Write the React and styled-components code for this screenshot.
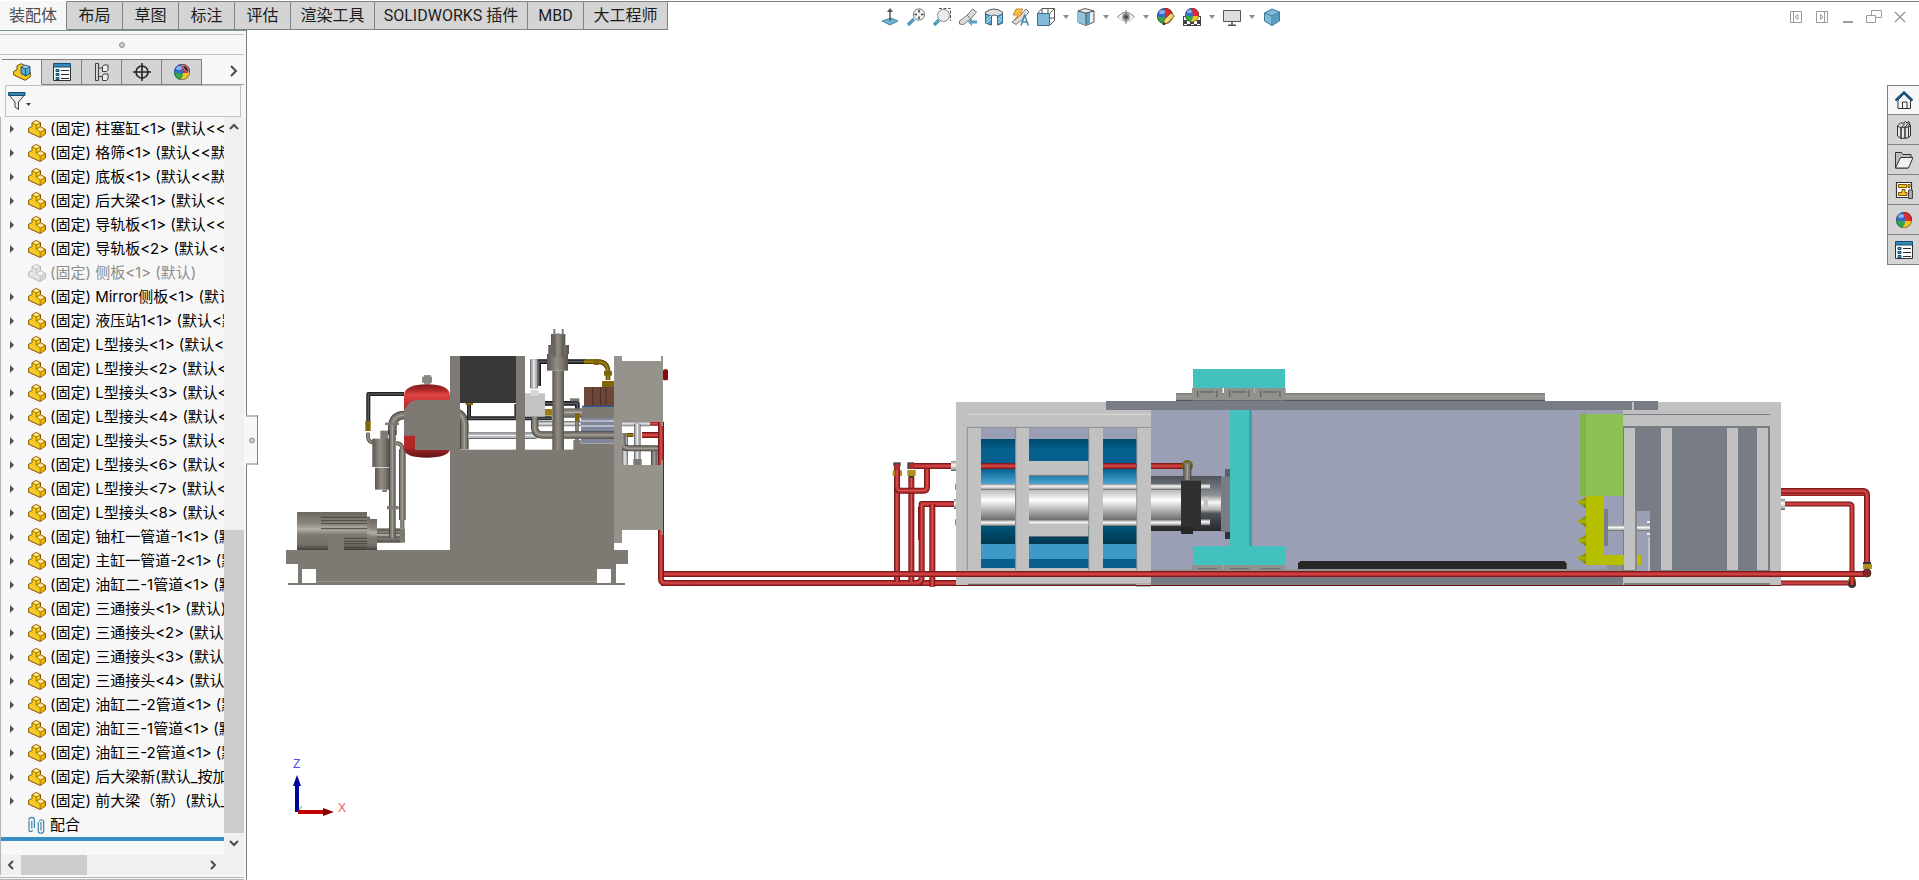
import React, { useState } from 'react';
import styled, { createGlobalStyle } from 'styled-components';

const GlobalStyle = createGlobalStyle`
  * {
    box-sizing: border-box;
  }

  body {
    margin: 0;
    background: #fff;
    font-family: Roboto, 'Noto Sans CJK SC', sans-serif;
    color: #000;
  }

  button {
    padding: 0;
    border: none;
    background: none;
    font: inherit;
    color: inherit;
    cursor: pointer;
  }
`;

const Window = styled.div`
  position: relative;
  display: flex;
  flex-direction: column;
  height: 100vh;
  min-height: 480px;
  overflow: hidden;
`;

const TopBar = styled.header`
  display: flex;
  height: 29px;
  margin-top: 1px;
  border-top: 1px solid #808080;
`;

const CommandTabs = styled.nav`
  display: flex;
  margin-top: -1px;
`;

const CommandTab = styled.button`
  min-width: ${props => props.$width || 56}px;
  height: 29px;
  border: 1px solid #808080;
  border-left: none;
  background: ${props => (props.$active ? '#f7f7f7' : '#d4d4d4')};
  border-top-color: ${props => (props.$active ? '#f7f7f7' : '#808080')};
  border-bottom-color: ${props => (props.$active ? '#f7f7f7' : '#808080')};
  color: ${props => (props.$active ? '#4c4c4c' : '#1c1c1c')};
  font-size: 16px;
  line-height: 26px;
  white-space: nowrap;
`;

const HudToolbar = styled.div`
  display: flex;
  flex: 1;
  align-items: center;
  padding-top: 2px;
  margin-left: 209px;
`;

const HudButton = styled.button`
  display: flex;
  align-items: center;
  justify-content: center;
  width: 26px;
  height: 26px;
`;

const HudArrow = styled.button`
  display: flex;
  align-items: center;
  justify-content: center;
  width: 14px;
  height: 26px;
`;

const WindowButtons = styled.div`
  display: flex;
  padding: 2px 6px 0 0;
`;

const Body = styled.div`
  display: flex;
  flex: 1;
  min-height: 0;
`;

const SidePanel = styled.aside`
  display: flex;
  flex-direction: column;
  width: 247px;
  padding-right: 2px;
  background: #f7f7f7;
  border-top: 1px solid #6f9a94;
  border-right: 1px solid #808080;
`;

const Grip = styled.div`
  display: flex;
  align-items: center;
  justify-content: center;
  height: 21px;
  margin-top: 3px;
  border: solid #c4c4c4;
  border-width: 1px 0;
`;

const GripDot = styled.span`
  width: 6px;
  height: 6px;
  border: 1px solid #909090;
  border-radius: 50%;
  background: #ccc;
`;

const PanelTabs = styled.div`
  display: flex;
  height: 26px;
  margin: 4px 0 0 2px;
  border-bottom: 1px solid #a0a0a0;
`;

const PanelTab = styled.button`
  display: flex;
  align-items: center;
  justify-content: center;
  width: 40px;
  height: 26px;
  border: solid #808080;
  border-width: 1px 1px 1px 0;
  border-bottom-color: ${props => (props.$active ? '#f7f7f7' : '#808080')};
  background: ${props => (props.$active ? '#f7f7f7' : '#d4d4d4')};
`;

const MoreTabs = styled.button`
  flex: 1;
  padding-left: 20px;
`;

const FilterBar = styled.div`
  display: flex;
  align-items: center;
  height: 32px;
  margin: 0 3px 0 5px;
  border: 1px solid #c0c0c0;
`;

const FilterButton = styled.button`
  display: flex;
  margin-left: 2px;
`;

const FilterInput = styled.input`
  flex: 1;
  min-width: 0;
  height: 26px;
  border: none;
  outline: none;
  background: transparent;
  font: inherit;
`;

const TreeArea = styled.div`
  display: flex;
  flex: 1;
  min-height: 0;
  border-left: 1px solid #b4b4b4;
`;

const Tree = styled.ul`
  flex: 1;
  min-width: 0;
  margin: 0;
  padding: 0;
  list-style: none;
  overflow: hidden;
  font-family: Inter, 'Noto Sans CJK SC', sans-serif;
`;

const TreeRow = styled.li`
  display: grid;
  grid-template-columns: 23px 22px 1fr;
  align-items: center;
  height: 24px;
  padding-left: 4px;
  color: ${props => (props.$muted ? '#8c8c8c' : '#000')};
  font-size: 15px;
  line-height: 24px;
  white-space: nowrap;
`;

const Twisty = styled.button`
  display: flex;
  width: 14px;
  height: 14px;
  align-items: center;
  justify-content: center;
`;

const RowLabel = styled.span`
  grid-column: 3;
  overflow: hidden;
`;

const RollbackBar = styled.li`
  height: 4px;
  background: #338fc4;
`;

const VScroll = styled.div`
  display: flex;
  flex-direction: column;
  width: 20px;
  padding-bottom: 2px;
  background: #f0f0f0;
`;

const VTrack = styled.div`
  display: flex;
  flex: 1;
  flex-direction: column;
  justify-content: flex-end;
`;

const VThumb = styled.div`
  height: 43.5%;
  background: #cdcdcd;
`;

const HScroll = styled.div`
  display: flex;
  height: 20px;
  padding-right: 21px;
  border-left: 1px solid #b4b4b4;
  background: #f0f0f0;
`;

const HTrack = styled.div`
  flex: 1;
`;

const HThumb = styled.div`
  width: 36%;
  height: 100%;
  background: #cdcdcd;
`;

const ScrollButton = styled.button`
  display: flex;
  align-items: center;
  justify-content: center;
  width: 20px;
  height: 20px;
`;

const PanelFoot = styled.div`
  height: 3px;
  margin-top: 2px;
  border: solid #b4b4b4;
  border-width: 1px 0;
`;

const CollapseHandle = styled.button`
  position: absolute;
  top: 50%;
  left: 246px;
  display: flex;
  align-items: center;
  justify-content: center;
  width: 12px;
  height: 49px;
  border: 1px solid #808080;
  border-left: none;
  background: #f7f7f7;
  transform: translateY(-50%);
`;

const Viewport = styled.main`
  display: flex;
  flex: 1;
  min-width: 0;
  background: #fff;
`;

const Canvas = styled.svg`
  flex: 1;
  min-width: 0;
  height: 100%;
`;

const TaskPane = styled.div`
  width: 32px;
  margin-top: 55px;
`;

const TaskButton = styled.button`
  display: flex;
  align-items: center;
  justify-content: center;
  width: 32px;
  height: 30px;
  border: solid #808080;
  border-width: 1px 0 0 1px;
  background: ${props => (props.$active ? '#f7f7f7' : '#d4d4d4')};

  &:first-child {
    height: 29px;
  }

  &:last-child {
    height: 31px;
    border-bottom-width: 1px;
  }
`;

const commandTabs = [
  { label: '装配体', width: 67 },
  { label: '布局' },
  { label: '草图' },
  { label: '标注' },
  { label: '评估' },
  { label: '渲染工具', width: 84 },
  { label: 'SOLIDWORKS 插件', width: 153 },
  { label: 'MBD' },
  { label: '大工程师', width: 84 },
];

const treeItems = [
  '(固定) 柱塞缸<1> (默认<<默认>_显示状态 1>)',
  '(固定) 格筛<1> (默认<<默认>_显示状态 1>)',
  '(固定) 底板<1> (默认<<默认>_显示状态 1>)',
  '(固定) 后大梁<1> (默认<<默认>_显示状态 1>)',
  '(固定) 导轨板<1> (默认<<默认>_显示状态 1>)',
  '(固定) 导轨板<2> (默认<<默认>_显示状态 1>)',
  '(固定) 侧板<1> (默认)',
  '(固定) Mirror侧板<1> (默认)',
  '(固定) 液压站1<1> (默认<默认_显示状态-1>)',
  '(固定) L型接头<1> (默认<<默认>_显示状态 1>)',
  '(固定) L型接头<2> (默认<<默认>_显示状态 1>)',
  '(固定) L型接头<3> (默认<<默认>_显示状态 1>)',
  '(固定) L型接头<4> (默认<<默认>_显示状态 1>)',
  '(固定) L型接头<5> (默认<<默认>_显示状态 1>)',
  '(固定) L型接头<6> (默认<<默认>_显示状态 1>)',
  '(固定) L型接头<7> (默认<<默认>_显示状态 1>)',
  '(固定) L型接头<8> (默认<<默认>_显示状态 1>)',
  '(固定) 铀杠一管道-1<1> (默认)',
  '(固定) 主缸一管道-2<1> (默认)',
  '(固定) 油缸二-1管道<1> (默认)',
  '(固定) 三通接头<1> (默认)',
  '(固定) 三通接头<2> (默认)',
  '(固定) 三通接头<3> (默认)',
  '(固定) 三通接头<4> (默认)',
  '(固定) 油缸二-2管道<1> (默认)',
  '(固定) 油缸三-1管道<1> (默认)',
  '(固定) 油缸三-2管道<1> (默认)',
  '(固定) 后大梁新(默认_按加工)',
  '(固定) 前大梁（新）(默认_按加工)',
];

const HIDDEN_ITEM = 6;

const Icon = ({ size = 18, children }) => (
  <svg width={size} height={size} viewBox={`0 0 ${size} ${size}`} fill="none" aria-hidden="true">
    {children}
  </svg>
);

const PartIcon = ({ muted }) => {
  const line = muted ? '#b4b4b4' : '#7a5609';
  return (
    <Icon>
      <path
        d="M.6 8.200 4 6.600V2.600L8.200.6l4.300 2v4.200l4.900 2.600v4.600l-5.300 3.500L.6 12.200z"
        fill={muted ? '#e4e4e4' : '#fbc81e'}
        stroke={line}
        strokeLinejoin="round"
      />
      <path d="M4.500 2.700 8.200 1l3.800 1.700-3.800 1.900zM9 9l3.400-1.700 4.300 2.200-4.500 2.400z" fill={muted ? '#f2f2f2' : '#fde98a'} />
      <path d="m12.500 12.400 4.400-2.400v3.700l-4.400 2.900z" fill={muted ? '#d8d8d8' : '#f0b400'} />
      <path d="M4 2.800 8.200 5v4l4 3.200v5M8.200 5l4.200-2.200M8.200 9l4.200-2.200M12.200 12.200l5-2.700" stroke={line} strokeWidth=".7" />
    </Icon>
  );
};

const AssemblyIcon = () => (
  <Icon>
    <path d="M.7 8.500 4 6.700V2.800L8.200.7l4.200 2v4.100l4.900 2.600v4.300l-5.100 3.600L.7 11.900z" fill="#fbc81e" stroke="#6b4a08" strokeLinejoin="round" />
    <path d="m8 4 4.500-1.800L17 3.500v7L12.500 13 8 10.500z" fill="#5fa9cf" stroke="#1b5676" />
    <path d="m8 4 4.500 1.600L17 3.600M12.500 5.600V13" stroke="#1b5676" />
    <path d="m8.800 4 3.700-1.300 3.600 1-3.600 1.300z" fill="#b4dcf0" />
  </Icon>
);

const ListIcon = () => (
  <Icon>
    <path d="M.5 1.500h17v16H.5z" fill="#fafafa" stroke="#303030" />
    <path d="M.5.5h17V4H.5z" fill="#3488b4" stroke="#164d6e" />
    <path d="M3 6.500h3v2H3zM3 10.500h3v2H3zM3 14.500h3v2H3z" fill="#5ba5cc" stroke="#164d6e" />
    <path d="M8 7.500h8M8 11.500h8M8 15.500h8" stroke="#303030" />
  </Icon>
);

const ConfigIcon = () => (
  <Icon>
    <path d="M2.500.5v17M5.500 5v12.500M2.500.5h3V5h5M5.500 13.500h5M2.500 17.500h3" stroke="#404040" />
    <path d="M9.500 3.500 11 2h4v5l-1.500 1.500h-4zM9.500 12.500 11 11h4v5l-1.500 1.500h-4z" fill="#eee" stroke="#404040" />
  </Icon>
);

const TargetIcon = () => (
  <Icon>
    <circle cx="9" cy="9" r="6" stroke="#222" strokeWidth="1.600" />
    <path d="M9 0v18M0 9h18" stroke="#222" strokeWidth="1.600" />
  </Icon>
);

const BallShape = ({ x = 9, y = 9, r = 8 }) => (
  <g transform={`translate(${x} ${y}) scale(${r / 8})`}>
    <circle r="8" fill="#2f6fd0" />
    <path d="M-1-8A8 8 0 0 1 8 1L1 1Q1-4-1-8Z" fill="#de2b2b" />
    <path d="M1 1h7A8 8 0 0 1-2 7.700Q1 5 1 1Z" fill="#f0c81c" />
    <path d="M-8 0Q-4 2 1 1 1 5-2 7.700A8 8 0 0 1-8 0Z" fill="#35a845" />
    <ellipse cx="-3" cy="-4" rx="3" ry="2" fill="#fff" opacity=".45" />
    <circle r="7.600" stroke="#223" strokeOpacity=".4" />
  </g>
);

const AppearanceIcon = ({ eraser }) => (
  <Icon>
    <BallShape />
    {eraser && <path d="M9 2q6 0 7 8Q11 8 9 2Z" fill="#2a2020" stroke="#eee" strokeWidth=".6" />}
  </Icon>
);

const FunnelIcon = () => (
  <svg width="24" height="20" viewBox="0 0 24 20" fill="none" aria-hidden="true">
    <path d="M1 4h15.500l-6 7v7.500L7 16v-5z" fill="#ececec" stroke="#404040" />
    <path d="M.5 1.500h16.500v3H.5z" fill="#3488b4" stroke="#164d6e" />
    <path d="M18 12h5l-2.500 3z" fill="#404040" />
  </svg>
);

const MatesIcon = () => (
  <Icon>
    <path
      d="M3.800 5v7.500M1 4.500V14a1.700 1.700 0 0 0 3.400 0M1 4a2.700 2.700 0 0 1 5.400 0v8M13 6v8.500M10.200 6v8.500a2.700 2.700 0 0 0 5.500 0V5.500a2.200 2.200 0 0 0-4.300 0"
      stroke="#3a86ad"
      strokeWidth="1.200"
    />
  </Icon>
);

const Chevron = ({ d }) => (
  <Icon size={12}>
    <path d={d} stroke="#4c4c4c" strokeWidth="2" />
  </Icon>
);

const Caret = () => (
  <svg width="6" height="4" aria-hidden="true">
    <path d="M0 0h6L3 4z" fill="#8c8c8c" />
  </svg>
);

// heads-up view toolbar glyphs
const hudItems = [
  {
    label: '正视于',
    art: (
      <>
        <path d="m1 13 9-3 7 3-8 4z" fill="#6db3d2" stroke="#4c87a5" />
        <path d="M9 3v10" stroke="#555" strokeWidth="1.400" />
        <path d="M9 0 6 4h6z" fill="#555" />
      </>
    ),
  },
  {
    label: '整屏显示全图',
    art: (
      <>
        <path d="m1 17 6-6" stroke="#5599bd" strokeWidth="3.500" />
        <circle cx="12" cy="6.500" r="5.700" fill="#eee" stroke="#777" />
        <path d="M12 2v2.500M12 8.500V11M7.500 6.500H10M14 6.500h2.500" stroke="#444" strokeWidth="1.600" />
      </>
    ),
  },
  {
    label: '局部放大',
    art: (
      <>
        <path d="M6 .5h11.500V13" stroke="#555" strokeDasharray="3 1.500" />
        <path d="m1 17 5-5" stroke="#5599bd" strokeWidth="3.500" />
        <circle cx="10.500" cy="7.500" r="6" fill="#e6ecef" stroke="#888" />
      </>
    ),
  },
  {
    label: '上一视图',
    art: (
      <>
        <path d="m.5 13 8-6 5-6 4 3-5 6-8 6.500-4-.5z" fill="#ddd" stroke="#777" />
        <path d="m8 7 4 4" stroke="#777" />
        <path d="m9 14 4-4v2.500h5v3h-5V18z" fill="#5a9fc4" />
      </>
    ),
  },
  {
    label: '剖面视图',
    art: (
      <>
        <path d="M.5 4Q9-2 17.500 4v11l-5 2V8q-3-2-6 0v9l-6-2z" fill="#ddd" stroke="#555" />
        <path d="m.5 6 6 2v9l-6-2zM12.500 8l5-2v9l-5 2z" fill="#5ca6cb" stroke="#346f8c" />
        <path d="m1 12 5-4M1 15l5-4M13 12l4-4M13 15l4-4" stroke="#d2ecf7" />
      </>
    ),
  },
  {
    label: '动态注解视图',
    art: (
      <>
        <path d="m1 14 8-7 6-6 3 3-5 6-8 6.500z" fill="#ddd" stroke="#777" />
        <path d="M5 1h7L9 5h3l-8 7 3-5H2z" fill="#f8c146" stroke="#bc7425" strokeWidth=".8" />
        <path d="m10 17.500 3.500-10 4 10M11.500 14h5" stroke="#4388ae" strokeWidth="1.500" />
      </>
    ),
  },
  {
    label: '视图定向',
    drop: true,
    art: (
      <>
        <path d="M.5 5.500 5 .5h12.500v12l-5 5" stroke="#555" />
        <path d="M5 .5v5M11 .5v5M12.500 5.500l5-5M12.500 10h5" stroke="#555" />
        <path d="M.5 5.500h12v12H.5z" fill="#7fbbd8" stroke="#3c6f8b" />
      </>
    ),
  },
  {
    label: '显示样式',
    drop: true,
    art: (
      <>
        <path d="m1 3 7-2.500 9 2.500v11l-8 3.500-8-3z" fill="#eee" stroke="#555" />
        <path d="m1 3 8 2v12.500l-8-3z" fill="#8fc3dc" />
        <path d="M9 5v12l4-2V4z" fill="#5aa0c4" />
        <path d="m1 3 8 2 8-2M9 5v12" stroke="#555" />
      </>
    ),
  },
  {
    label: '隐藏/显示项目',
    drop: true,
    art: (
      <>
        <path d="M.5 9Q9-.5 17.500 9 9 18.500.5 9Z" fill="#f4f4f4" stroke="#c4c4c4" />
        <path d="M.5 9Q9-.5 17.500 9" stroke="#8c8c8c" />
        <circle cx="9" cy="9" r="3.800" fill="#8a8a8a" />
        <circle cx="9" cy="9" r="1.700" fill="#222" />
        <path d="M9 2v14" stroke="#777" />
      </>
    ),
  },
  {
    label: '编辑外观',
    art: (
      <>
        <BallShape x={8} y={8} r={8} />
        <path d="m6 17 1-5 7-7 3.500 3-7 7z" fill="#f7d674" stroke="#7a5b20" />
        <path d="m6 17 1-3 2 2z" fill="#222" />
      </>
    ),
  },
  {
    label: '应用布景',
    drop: true,
    art: (
      <>
        <path d="M0 8h18v10H0z" fill="#444" />
        <path d="M1 9h3v3H1zM14 9h3v3h-3zM4 13h3v3H4zM11 13h3v3h-3zM1 16h3v1H1zM14 16h3v1h-3zM8 16h3v1H8z" fill="#fff" />
        <BallShape x={9} y={7} r={7} />
      </>
    ),
  },
  {
    label: '视图设定',
    drop: true,
    art: (
      <>
        <path d="M.5 2.500h17v11H.5z" fill="#ddd" stroke="#555" />
        <path d="M9 14v3M5 17.300h8" stroke="#555" strokeWidth="1.600" />
      </>
    ),
  },
  {
    label: '三维视图',
    art: (
      <>
        <path d="m1.500 5 7.500-4 7.500 3v9L9 17.500 1.500 13z" fill="#7fbbd8" stroke="#3c7897" />
        <path d="m1.500 5 7.500 3 7.500-4M9 8v9.500" stroke="#3c7897" />
        <path d="M9.500 8.400 16 5v8l-6.500 4z" fill="#569dc2" />
      </>
    ),
  },
];

const windowItems = [
  { label: '向左展开', art: <path d="M3.500 3.500h11v11h-11zM6.500 3v12M11 6.500v5L8 9z" /> },
  { label: '向右展开', art: <path d="M3.500 3.500h11v11h-11zM11.500 3v12M7.500 6.500v5L10 9z" /> },
  { label: '最小化', art: <path d="M4 14h10" strokeWidth="2" /> },
  { label: '还原', art: <path d="M1.500 7.500h9v7h-9zM6.500 7V2.500h10v7H11" /> },
  { label: '关闭', art: <path d="m4 4 10 10M14 4 4 14" strokeWidth="1.500" /> },
];

const taskItems = [
  {
    label: 'SOLIDWORKS 资源',
    art: (
      <>
        <path d="M3 9v8.500h12.500V9L9 3z" fill="#f4f4f4" stroke="#333" />
        <path d="M7.500 17v-6H12v6" stroke="#333" />
        <path d="m.5 9.500 8.500-8 8.500 8" stroke="#195a82" strokeWidth="2.500" />
      </>
    ),
  },
  {
    label: '设计库',
    art: (
      <>
        <path d="m2.500 5 3.500 2v10.500l-3.500-2.500zM6 7l4-1v11l-4 .5zM10 6.500l3.500-.5v10.500l-3.500 1zM13.500 6l2-1v10l-2 1.500z" fill="#e6e6e6" stroke="#333" />
        <path d="M2.500 5 6 1.500l2 1 2.500-2 1.500 1.500 2-1.500L15.500 5M6 7l4-4.500M10 6.500l3.500-4.500M13.500 6l1-3" stroke="#333" />
      </>
    ),
  },
  {
    label: '文件探索器',
    art: (
      <>
        <path d="M.5 1.500h6l1.500 2h8v3L13 17H.5z" fill="#bdbdbd" stroke="#333" />
        <path d="m.5 17 5-10.500h12.500L13.500 17z" fill="#f1f1f1" stroke="#333" />
      </>
    ),
  },
  {
    label: '视图调色板',
    art: (
      <>
        <path d="M1.500 1.500h15v15h-15z" fill="#fff" stroke="#333" strokeWidth="1.200" />
        <path d="M3.500 3.500h8v3h-8zM13 3.500h2v3h-2zM7 8.500h3v3h2v3H3.500v-3H7z" fill="#f8c01c" stroke="#7d560c" />
        <path d="M13.500 9h4v8.500h-4z" fill="#aaa" stroke="#444" />
      </>
    ),
  },
  { label: '外观、布景和贴图', art: <BallShape /> },
  { label: '自定义属性', art: null },
];

const tones = {
  red: ['#6e1717', '#b32b2c', '#dd5a58'],
  taupe: ['#4b4741', '#7e7972', '#a39e96'],
  silver: ['#6f7074', '#b4b6b9', '#ececec'],
  black: ['#151517', '#303034', '#6a6d70'],
  gold: ['#4c3c02', '#806508', '#b5952a'],
};

// A tube: dark edge, body colour and a highlight along the same run
const Pipe = ({ d, w = 6, tone = 'red' }) => {
  const [edge, body, shine] = tones[tone];
  return (
    <g fill="none" strokeLinejoin="round">
      <path d={d} stroke={edge} strokeWidth={w} />
      <path d={d} stroke={body} strokeWidth={w * 0.72} />
      <path d={d} stroke={shine} strokeWidth={w * 0.2} />
    </g>
  );
};

const Box = ({ x, y, w, h, fill = '#7e7972' }) => <rect x={x} y={y} width={w} height={h} fill={fill} />;

const Gradient = ({ id, stops, horizontal }) => (
  <linearGradient id={id} x1="0" y1="0" x2={horizontal ? 1 : 0} y2={horizontal ? 0 : 1}>
    {stops.map(([offset, color]) => (
      <stop key={offset} offset={offset} stopColor={color} />
    ))}
  </linearGradient>
);

const Defs = () => (
  <defs>
    <Gradient id="motor" stops={[[0, '#6b6760'], [0.3, '#8a857e'], [0.45, '#b3aea6'], [0.6, '#7e7972'], [0.85, '#75706a'], [1, '#45413c']]} />
    <Gradient id="tankTop" stops={[[0, '#7c1d1d'], [0.08, '#b12829'], [0.14, '#e04444'], [0.3, '#b92c2d'], [0.85, '#b12829'], [1, '#5c1414']]} />
    <Gradient id="stack" horizontal stops={[[0, '#5b5751'], [0.45, '#918c84'], [0.7, '#7e7972'], [1, '#57534d']]} />
    <Gradient id="chrome" stops={[[0, '#b5b5b5'], [0.35, '#ffffff'], [0.55, '#d0d0d0'], [1, '#6c6c6c']]} />
    <Gradient id="rod" stops={[[0, '#8c8c8c'], [0.4, '#f8f8f8'], [0.8, '#b0b0b0'], [1, '#555555']]} />
    <Gradient id="sea" stops={[[0, '#004a6c'], [0.25, '#05608f'], [0.65, '#05608f'], [1, '#4aa4d4']]} />
    <Gradient id="deep" stops={[[0, '#00567c'], [1, '#013850']]} />
    <Gradient id="sleeve" stops={[[0, '#4f545b'], [0.25, '#777c85'], [0.45, '#a3a9b2'], [0.7, '#4c5056'], [1, '#26282b']]} />
    <Gradient id="rail" stops={[[0, '#787a77'], [0.4, '#9b9d98'], [1, '#858783']]} />
    <Gradient id="spike" stops={[[0, '#767e00'], [0.5, '#aab400'], [1, '#626900']]} />
  </defs>
);

const PowerUnit = () => (
  <g transform="translate(270 320) scale(.33333)">
    {/* hoses and suction lines on the left */}
    <Pipe tone="black" w={12} d="M402 222H295V305" />
    <Box x={286} y={303} w={16} h={30} fill="#806508" />
    <Pipe tone="taupe" w={11} d="M294 338V352Q296 368 312 368" />
    <Box x={331} y={332} w={24} h={28} />
    <Box x={307} y={356} w={50} h={85} fill="url(#stack)" />
    <Box x={315} y={443} w={43} h={66} fill="url(#stack)" />
    <Box x={337} y={509} w={14} h={7} />
    <Pipe tone="taupe" w={12} d="M378 370Q397 370 397 388V625" />
    <Pipe tone="taupe" w={20} d="M397 388V600" />

    {/* motor and pump */}
    <Box x={81} y={576} w={72} h={114} fill="url(#motor)" />
    <Box x={153} y={576} w={138} h={114} fill="url(#motor)" />
    <path d="M153 592H291M153 602H291M153 611H291M153 626H291M222 655H291M222 664H291M222 671H291M222 682H291" stroke="#4a4640" strokeWidth="3" />
    <Box x={174} y={647} w={48} h={43} />
    <Box x={291} y={590} w={9} h={100} fill="url(#motor)" />
    <Box x={300} y={597} w={21} h={93} fill="url(#motor)" />
    <Box x={321} y={625} w={70} h={43} fill="url(#motor)" />
    <path d="M321 630H390M321 640H390M321 651H390M321 663H390" stroke="#5a564f" strokeWidth="3" />
    <Box x={390} y={625} w={15} h={43} />
    <Pipe tone="taupe" w={26} d="M405 285Q367 285 367 322V345" />
    <Pipe tone="taupe" w={20} d="M367 330V655" />
    <Box x={345} y={308} w={42} h={7} />
    <Box x={351} y={558} w={35} h={10} />

    {/* accumulator */}
    <Box x={462} y={165} w={20} h={28} fill="#96938f" />
    <Box x={456} y={170} w={30} h={18} fill="#888783" />
    <path d="M402 225Q405 193 471 193T540 225V388Q535 413 470 413T402 388Z" fill="url(#tankTop)" />
    <path d="M402 270 420 247 440 240H540V390H435V347H402Z" fill="#7e7972" />
    <Pipe tone="taupe" w={26} d="M565 280Q583 290 583 315V388" />

    {/* plumbing behind the frame columns */}
    <Pipe tone="black" w={12} d="M597 255V295H845" />
    <Box x={587} y={249} w={22} h={6} fill="#806508" />
    <Pipe tone="silver" w={20} d="M595 347H800" />
    <Pipe tone="silver" w={16} d="M805 311H1140" />
    <Box x={733} y={252} w={32} h={38} fill="#333337" />
    <Pipe tone="black" w={14} d="M806 198V125H835M893 125H945" />
    <Pipe tone="silver" w={24} d="M792 118V205" />
    <Pipe tone="black" w={14} d="M825 250H922V282" />
    <Box x={825} y={267} w={22} h={20} fill="#9c7f12" />
    <Box x={882} y={265} w={54} h={28} fill="url(#motor)" />
    <Box x={915} y={280} w={14} h={24} fill="#806508" />
    <Box x={900} y={235} w={28} h={9} />
    <Pipe tone="taupe" w={10} d="M921 304V360" />
    <Box x={910} y={360} w={22} h={30} />
    <Pipe tone="gold" w={14} d="M942 125H985Q1014 127 1014 155V180" />
    <Box x={971} y={117} w={16} h={18} fill="#806508" />
    <Box x={1002} y={153} w={24} h={14} fill="#806508" />
    <Box x={996} y={183} w={36} h={18} fill="#806508" />
    <Box x={942} y={201} w={90} h={57} fill="#6d4738" />
    <path d="M968 201V258M992 201V258M1008 201V258" stroke="#4a2e23" strokeWidth="3" />
    <Box x={936} y={258} w={96} h={36} />
    <Box x={936} y={257} w={96} h={4} fill="#2e5795" />
    <Box x={933} y={294} w={99} h={75} fill="#80879a" />
    <path d="M933 303H1032M933 318H1032" stroke="#c7cbd4" strokeWidth="4" />
    <Box x={930} y={370} w={102} h={20} />
    <Pipe tone="taupe" w={22} d="M794 290V325Q796 345 818 345H1032" />
    <Box x={765} y={220} w={60} h={70} fill="#c3c3c3" />
    <Box x={782} y={210} w={24} h={18} fill="#d8d8d8" />
    <Box x={850} y={27} w={6} h={30} />
    <Box x={875} y={27} w={6} h={30} />
    <Box x={843} y={42} w={43} h={35} fill="url(#stack)" />
    <Box x={835} y={75} w={62} h={27} fill="url(#stack)" />
    <Box x={831} y={102} w={63} h={50} fill="url(#stack)" />
    <Box x={847} y={152} w={35} h={240} fill="url(#stack)" />
    <path d="M849 110V62Q850 40 864 40T881 62V110Z" fill="url(#stack)" />

    {/* tank, frame columns, skid */}
    <Box x={540} y={108} w={30} h={285} />
    <Box x={570} y={108} w={168} h={141} fill="#383838" />
    <Box x={738} y={108} w={27} h={285} />
    <Box x={540} y={389} w={492} h={301} />
    <Box x={48} y={690} w={1026} h={42} />
    <Box x={84} y={732} w={954} h={15} />
    <Box x={84} y={747} w={12} h={43} />
    <Box x={138} y={747} w={843} h={45} />
    <Box x={1023} y={747} w={15} h={43} />
    <Box x={54} y={789} w={1011} h={6} />
    <Box x={138} y={783} w={843} h={3} fill="#98948d" />

    {/* cabinet on the right */}
    <Pipe tone="silver" w={20} d="M1102 311V418" />
    <Pipe tone="silver" w={18} d="M1065 340V435" />
    <Box x={1090} y={417} w={25} h={18} />
    <Pipe tone="taupe" w={20} d="M1153 390V435" />
    <Pipe tone="taupe" w={18} d="M1058 340V372Q1060 385 1075 385H1165" />
    <Pipe tone="gold" w={12} d="M1070 345H1090" />
    <Pipe w={12} d="M1140 311H1166" />
    <Pipe w={18} d="M1116 345H1166" />
    <Box x={1032} y={108} w={24} h={561} fill="#96928c" />
    <Pipe w={18} d="M1173 305V776Q1173 789 1186 789H1262" />
    <Pipe w={18} d="M1182 762H1262" />
    <Box x={1056} y={123} w={120} h={182} fill="#96928c" />
    <Box x={1173} y={108} w={6} h={210} fill="#96928c" />
    <Box x={1056} y={435} w={120} h={195} fill="#96928c" />
    <Box x={1173} y={420} w={6} h={225} fill="#96928c" />
    <rect x="1179" y="148" width="15" height="33" rx="5" fill="#8e0509" />
  </g>
);

const Foot = ({ x, y, h = 37 }) => (
  <g>
    <Box x={x} y={y} w={92} h={h} fill="#90928e" />
    <path d={`M${x + 17} ${y + 8}V${y + h - 10}M${x + 75} ${y + 8}V${y + h - 10}M${x + 24} ${y + 12}H${x + 68}`} stroke="#555754" strokeWidth="3" />
  </g>
);

const Press = () => (
  <g transform="translate(880 360) scale(.33333)">
    {/* chamber */}
    <Box x={813} y={150} w={1416} h={480} fill="#9a9fb5" />
    <Box x={813} y={628} w={1416} h={10} fill="#8f918d" />
    <Box x={813} y={648} w={1416} h={27} fill="#777c85" />
    <Box x={888} y={99} w={1107} h={24} fill="url(#rail)" />
    <Box x={888} y={120} w={1107} h={3} fill="#545652" />
    <path d="M1254 627V610L1261 603H2053L2060 610V627Z" fill="#262626" />

    {/* supply pipes to the left of the frame */}
    <Pipe w={18} d="M51 318V665" />
    <Pipe w={18} d="M94 350V665" />
    <Pipe w={18} d="M51 318V380Q51 392 63 392H130Q141 392 141 381V327" />
    <Pipe w={18} d="M94 318H228" />
    <Box x={114} y={440} w={6} h={100} fill="#7a1c1c" />
    <Pipe w={18} d="M228 432H125V650Q125 669 108 669" />
    <Pipe w={18} d="M157 432V680" />
    <Box x={82} y={307} w={20} h={20} fill="#444" />
    <circle cx="95" cy="318" r="9" fill="#b32b2c" />
    <Box x={82} y={330} w={25} h={18} fill="#b0901c" />
    <Box x={86} y={348} w={16} h={5} fill="#333" />
    <Box x={40} y={307} w={22} h={12} fill="#444" />
    <circle cx="51" cy="320" r="9" fill="#b32b2c" />
    <Box x={38} y={331} w={7} h={17} fill="#b0901c" />
    <Box x={60} y={331} w={6} h={17} fill="#b0901c" />
    <Box x={213} y={303} w={15} h={30} fill="url(#rod)" />
    <Box x={222} y={417} w={7} h={30} fill="url(#rod)" />
    <Box x={225} y={372} w={5} h={17} fill="#888" />
    <Box x={225} y={478} w={5} h={18} fill="#888" />

    {/* cylinder between the frame and the ram */}
    <Box x={813} y={348} w={212} h={165} fill="url(#sleeve)" />
    <Box x={813} y={388} w={92} h={92} fill="url(#chrome)" />
    <Box x={813} y={372} w={92} h={17} fill="url(#rod)" />
    <Box x={813} y={480} w={92} h={18} fill="url(#rod)" />
    <Pipe w={18} d="M813 318H910" />
    <Box x={963} y={405} w={60} h={55} fill="url(#rod)" />
    <Box x={971} y={412} w={13} h={36} fill="#c4c4c4" />
    <Box x={963} y={372} w={27} h={16} fill="url(#rod)" />
    <Box x={963} y={478} w={27} h={18} fill="url(#rod)" />
    <Box x={1035} y={327} w={15} h={24} fill="#5c6068" />
    <Box x={1035} y={515} w={15} h={22} fill="#303236" />
    <Box x={1023} y={350} w={27} h={166} fill="#777c85" />
    <circle cx="922" cy="317" r="14" fill="#78787a" stroke="#6a6800" strokeWidth="6" />
    <Pipe tone="taupe" w={24} d="M922 312V360" />
    <Box x={903} y={362} w={60} h={144} fill="#303030" />
    <Box x={903} y={500} w={36} h={22} fill="#262626" />

    {/* ram */}
    <Box x={1050} y={150} w={57} h={410} fill="#43c1be" />
    <Box x={1107} y={150} w={9} h={410} fill="#38a5a4" />
    <Box x={939} y={27} w={276} h={57} fill="#43c1be" />
    <Box x={939} y={558} w={276} h={57} fill="#43c1be" />
    {[936, 1032, 1125].map(x => (
      <React.Fragment key={x}>
        <Foot x={x} y={84} />
        <Box x={x} y={615} w={92} h={15} fill="#90928e" />
        <path d={`M${x + 17} 626H${x + 75}`} stroke="#6b6d69" strokeWidth="3" />
      </React.Fragment>
    ))}

    {/* left frame */}
    <Box x={228} y={126} w={585} h={549} fill="#c1c1c1" />
    <path d="M261 163H813" stroke="#dadada" strokeWidth="3" />
    <path d="M262 630V202H813" fill="none" stroke="#909090" strokeWidth="3" />
    <path d="M407 204V630M626 204V630M770 204V630" stroke="#858585" strokeWidth="3" />
    {[[303, 102], [447, 178], [669, 100]].map(([x, w]) => (
      <g key={x}>
        <Box x={x} y={204} w={w} h={34} fill="#9a9fb5" />
        <Box x={x} y={237} w={w} h={136} fill="url(#sea)" />
        <Box x={x} y={388} w={w} h={92} fill="url(#chrome)" />
        <Box x={x} y={372} w={w} h={17} fill="url(#rod)" />
        <Box x={x} y={480} w={w} h={18} fill="url(#rod)" />
        <Box x={x} y={498} w={w} h={54} fill="url(#deep)" />
        <Box x={x} y={552} w={w} h={45} fill="#3e98c8" />
        <Box x={x} y={597} w={w} h={27} fill="#0a608c" />
        {w < 150 && <Pipe w={18} d={`M${x} 318H${x + w}`} />}
      </g>
    ))}
    <Box x={447} y={303} w={178} h={44} fill="#c1c1c1" />
    <path d="M447 346H625M447 529H625" stroke="#777" strokeWidth="3" />
    <Box x={447} y={492} w={178} h={36} fill="#c1c1c1" />
    <path d="M264 673H813" stroke="#555" strokeWidth="3" />
    <Box x={768} y={672} w={45} h={9} fill="#b4b4b4" />
    <Box x={678} y={123} w={1656} h={27} fill="#777c85" />
  </g>
);

const EndFrame = () => (
  <g>
    <Box x={1623} y={410} w={158} h={175} fill="#c1c1c1" />
    <Box x={1658} y={402} w={123} h={10} fill="#c1c1c1" />
    <Box x={1632} y={402} w={2} h={8} fill="#c1c1c1" />
    <Box x={1623} y={414} w={147} h={1} fill="#777c85" />
    <Box x={1623} y={426} w={147} h={145} fill="#777c85" />
    <Box x={1635} y={511} w={15} h={60} fill="#9a9fb5" />
    <Box x={1608} y={525} w={42} h={6} fill="url(#rod)" />
    <Box x={1604} y={509} w={4} h={37} fill="#777c85" />
    <Box x={1647} y={521} w={3} h={2} fill="#eee" />
    <Box x={1647} y={533} w={3} h={2} fill="#eee" />
    <Box x={1648} y={537} w={2} h={34} fill="#c1c1c1" />
    <Box x={1586} y={496} w={18} h={69} fill="#b5bf00" />
    <Box x={1586} y={555} w={55} h={10} fill="#b5bf00" />
    <Box x={1624} y={428} w={11} h={142} fill="#c1c1c1" />
    <Box x={1635} y={511} w={2} h={59} fill="#888" />
    <Box x={1661} y={428} w={11} h={142} fill="#c1c1c1" />
    <Box x={1727} y={428} w={11} h={142} fill="#c1c1c1" />
    <Box x={1757} y={428} w={11} h={142} fill="#c1c1c1" />
    <Box x={1624} y={583} w={146} h={2} fill="#777c85" />
    <Box x={1607} y={565} w={16} h={6} fill="#8f918d" />
    <Box x={1586} y={414} w={37} h={82} fill="#8dc153" />
    <Box x={1580} y={414} w={6} h={82} fill="#82b34e" />
    {[502, 521, 540, 558].map(y => (
      <path key={y} d={`M1577 ${y} 1586 ${y - 5}V${y + 6}Z`} fill="url(#spike)" />
    ))}
    <Box x={1781} y={499} w={4} h={11} fill="url(#rod)" />
    <Pipe d="M1781 494H1864" w={4} />
    <Pipe d="M1785 504H1849Q1852 504 1852 507V585" w={5} />
    <Pipe d="M1781 583H1849" w={5} />
    <Pipe d="M1781 491H1863Q1867 491 1867 496V563" />
    <Box x={1848} y={579} w={8} h={3} fill="#a88a1a" />
    <circle cx="1852" cy="584" r="4" fill="#3c3434" />
    <Pipe d="M1852 574V585" w={5} />
  </g>
);

const Triad = () => (
  <g fontFamily="'Liberation Sans', sans-serif" fontSize="12">
    <path d="m298 811 4-5" stroke="#1fd01f" strokeWidth="1" />
    <path d="M297 812V784" stroke="#00009c" strokeWidth="4" />
    <path d="m297 775 4 11h-8z" fill="#00009c" />
    <path d="M298 812H325" stroke="#c20000" strokeWidth="4" />
    <path d="m334 812-11-4v8z" fill="#8c0000" />
    <text x="293" y="768" fill="#4c4ce8">Z</text>
    <text x="338" y="812" fill="#f25555">X</text>
  </g>
);

const Model = () => (
  <Canvas viewBox="247 30 1640 850" role="img" aria-label="装配体模型">
    <Defs />
    <Pipe d="M661 583H956" />
    <PowerUnit />
    <Press />
    <EndFrame />
    <Box x={956} y={585} w={825} h={1} fill="#6e1717" />
    <Pipe d="M664 574H1867" />
    <Box x={1863} y={562} w={8} h={2} fill="#333" />
    <Box x={1863} y={564} w={9} h={5} fill="#b0901c" />
    <circle cx="1867" cy="573" r="4" fill="#8a2424" stroke="#403030" />
    <Triad />
  </Canvas>
);

const FeatureTree = () => (
  <Tree role="tree">
    {treeItems.map((label, index) => {
      const muted = index === HIDDEN_ITEM;
      return (
        <TreeRow key={label} role="treeitem" $muted={muted}>
          {muted ? (
            <span />
          ) : (
            <Twisty aria-label="展开">
              <svg width="4" height="8" aria-hidden="true">
                <path d="M0 0 4 4 0 8z" fill="#505050" />
              </svg>
            </Twisty>
          )}
          <PartIcon muted={muted} />
          <RowLabel>{label}</RowLabel>
        </TreeRow>
      );
    })}
    <TreeRow role="treeitem">
      <span />
      <MatesIcon />
      <RowLabel>配合</RowLabel>
    </TreeRow>
    <RollbackBar role="separator" />
  </Tree>
);

const App = () => {
  const [activeTab, setActiveTab] = useState('装配体');
  const [panelTab, setPanelTab] = useState(0);
  const [filter, setFilter] = useState('');

  const panelTabs = [
    { label: '特征管理', icon: <AssemblyIcon /> },
    { label: '属性管理', icon: <ListIcon /> },
    { label: '配置管理', icon: <ConfigIcon /> },
    { label: '尺寸专家', icon: <TargetIcon /> },
    { label: '外观管理', icon: <AppearanceIcon eraser /> },
  ];

  return (
    <Window>
      <GlobalStyle />
      <TopBar>
        <CommandTabs>
          {commandTabs.map(tab => (
            <CommandTab
              key={tab.label}
              $width={tab.width}
              $active={tab.label === activeTab}
              onClick={() => setActiveTab(tab.label)}
            >
              {tab.label}
            </CommandTab>
          ))}
        </CommandTabs>
        <HudToolbar>
          {hudItems.map(item => (
            <React.Fragment key={item.label}>
              <HudButton aria-label={item.label}>
                <Icon>{item.art}</Icon>
              </HudButton>
              {item.drop && (
                <HudArrow aria-label={`${item.label}选项`}>
                  <Caret />
                </HudArrow>
              )}
            </React.Fragment>
          ))}
        </HudToolbar>
        <WindowButtons>
          {windowItems.map(item => (
            <HudButton key={item.label} aria-label={item.label}>
              <Icon>
                <g stroke="#9c9c9c">{item.art}</g>
              </Icon>
            </HudButton>
          ))}
        </WindowButtons>
      </TopBar>

      <Body>
        <SidePanel>
          <Grip>
            <GripDot />
          </Grip>
          <PanelTabs>
            {panelTabs.map((tab, index) => (
              <PanelTab
                key={tab.label}
                aria-label={tab.label}
                $active={index === panelTab}
                onClick={() => setPanelTab(index)}
              >
                {tab.icon}
              </PanelTab>
            ))}
            <MoreTabs aria-label="更多">
              <Chevron d="m4 1 5 5-5 5" />
            </MoreTabs>
          </PanelTabs>
          <FilterBar>
            <FilterButton aria-label="过滤器">
              <FunnelIcon />
            </FilterButton>
            <FilterInput aria-label="过滤" value={filter} onChange={e => setFilter(e.target.value)} />
          </FilterBar>
          <TreeArea>
            <FeatureTree />
            <VScroll>
              <ScrollButton aria-label="向上滚动">
                <Chevron d="m2 8 4-4 4 4" />
              </ScrollButton>
              <VTrack>
                <VThumb />
              </VTrack>
              <ScrollButton aria-label="向下滚动">
                <Chevron d="m2 4 4 4 4-4" />
              </ScrollButton>
            </VScroll>
          </TreeArea>
          <HScroll>
            <ScrollButton aria-label="向左滚动">
              <Chevron d="M8 2 4 6l4 4" />
            </ScrollButton>
            <HTrack>
              <HThumb />
            </HTrack>
            <ScrollButton aria-label="向右滚动">
              <Chevron d="m4 2 4 4-4 4" />
            </ScrollButton>
          </HScroll>
          <PanelFoot />
        </SidePanel>
        <Viewport>
          <Model />
          <TaskPane>
            {taskItems.map((item, index) => (
              <TaskButton key={item.label} aria-label={item.label} $active={index === 0}>
                {item.art ? <Icon>{item.art}</Icon> : <ListIcon />}
              </TaskButton>
            ))}
          </TaskPane>
        </Viewport>
      </Body>
      <CollapseHandle aria-label="折叠面板">
        <GripDot />
      </CollapseHandle>
    </Window>
  );
};

export default App;
